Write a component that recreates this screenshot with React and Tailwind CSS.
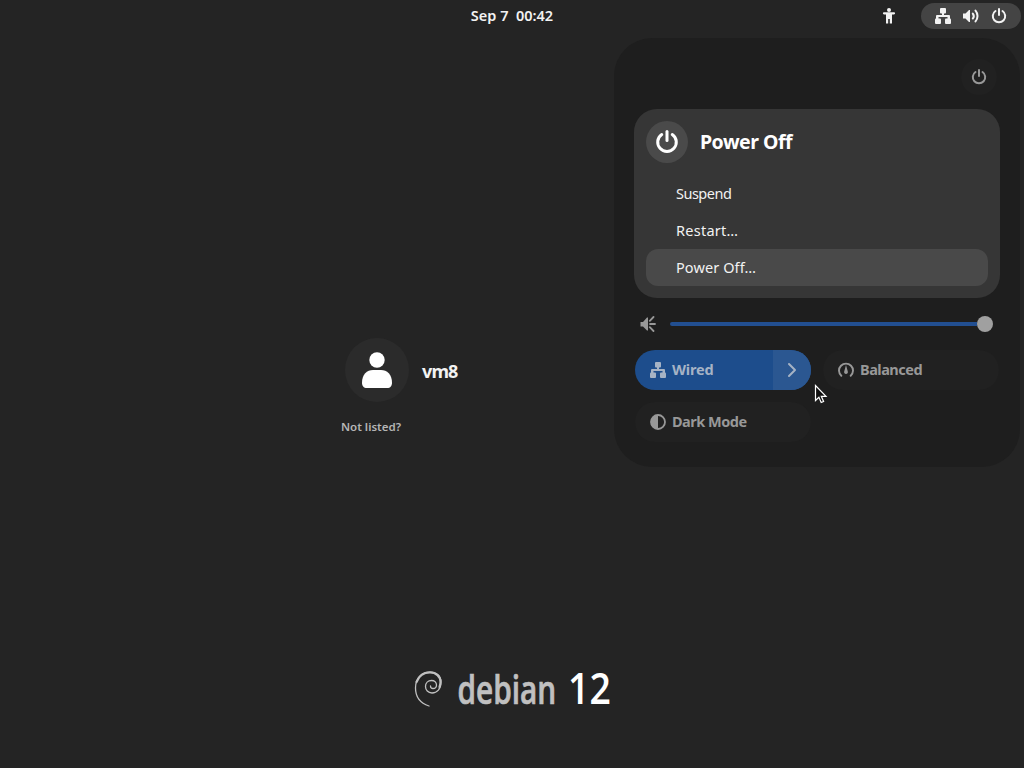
import React from 'react'

function PowerIcon({ size = 16, className = '' }) {
  return (
    <svg width={size} height={size} viewBox="0 0 16 16" fill="none" stroke="currentColor" strokeWidth="2" strokeLinecap="round" className={className}>
      <path d="M4.500 3A6.200 6.200 0 1 0 11.500 3" />
      <path d="M8 1v6" />
    </svg>
  )
}

function WiredIcon() {
  return (
    <svg width="16" height="16" viewBox="0 0 16 16" fill="currentColor">
      <rect x="5" y="0" width="6" height="5.500" rx="1" />
      <rect x="0" y="10.500" width="6" height="5.500" rx="1" />
      <rect x="10" y="10.500" width="6" height="5.500" rx="1" />
      <path d="M7 5h2v2h5a1 1 0 0 1 1 1v3h-2.500V9h-9v2H1V8a1 1 0 0 1 1-1h5z" />
    </svg>
  )
}

function AccessibilityIcon() {
  return (
    <svg width="16" height="16" viewBox="0 0 16 16" fill="currentColor">
      <circle cx="8" cy="2" r="2" />
      <path d="M3 4.200h10a1.100 1.100 0 0 1 0 2.200h-2V15.500H8.800V11H7.200v4.500H5V6.400H3a1.100 1.100 0 0 1 0-2.200z" />
    </svg>
  )
}

function SpeakerIcon() {
  return (
    <svg width="16" height="16" viewBox="0 0 16 16" fill="none" stroke="currentColor" strokeWidth="2" strokeLinecap="round">
      <path d="M0 5.500h2.500L6 2h1v12H6l-3.500-3.500H0z" fill="currentColor" stroke="none" />
      <path d="M9.800 5.500a4 4 0 0 1 0 5" />
      <path d="M12.500 2.600a8.200 8.200 0 0 1 0 10.800" />
    </svg>
  )
}

function SliderSpeakerIcon() {
  return (
    <svg width="16" height="16" viewBox="0 0 16 16" fill="none" stroke="currentColor" strokeWidth="1.800" strokeLinecap="round">
      <path d="M0.500 6H3l4-4.500h1v13H7L3 10.500H0.500z" fill="currentColor" stroke="none" />
      <path d="M10 8h5M9.800 4.800l3.700-3.800M9.800 11.200l3.700 3.800" />
    </svg>
  )
}

function BalancedIcon() {
  return (
    <svg width="16" height="16" viewBox="0 0 16 16" fill="none" stroke="currentColor" strokeWidth="1.900" strokeLinecap="round">
      <path d="M3.300 13.800A7 7 0 1 1 12.700 13.800" />
      <path d="M8 3L9.800 9.500a1.900 1.900 0 1 1-3.600 0z" fill="currentColor" stroke="none" />
    </svg>
  )
}

function DarkModeIcon() {
  return (
    <svg width="16" height="16" viewBox="0 0 16 16">
      <circle cx="8" cy="8" r="7" fill="none" stroke="currentColor" strokeWidth="1.800" />
      <path d="M8 1a7 7 0 0 0 0 14z" fill="currentColor" />
    </svg>
  )
}

function TopBar() {
  return (
    <header className="grid h-8 grid-cols-3 items-center text-[#f2f2f2]">
      <div />
      <div className="pb-0.5 text-center text-[14.500px] leading-[30px] font-semibold whitespace-pre">Sep 7  00:42</div>
      <div className="flex items-center justify-end gap-6 pr-[3px]">
        <AccessibilityIcon />
        <div className="flex h-[26px] w-[100px] items-center justify-center gap-3 rounded-full bg-[#444444]">
          <WiredIcon />
          <SpeakerIcon />
          <PowerIcon />
        </div>
      </div>
    </header>
  )
}

function UserList() {
  return (
    <section className="mx-auto mt-[306px] w-[342px]">
      <div className="flex items-center gap-[13px] pl-1">
        <div className="flex size-16 items-center justify-center rounded-full bg-[#2b2b2b]">
          <svg width="32" height="38" viewBox="0 0 32 38" fill="#ffffff">
            <circle cx="16" cy="9" r="7.700" />
            <path d="M1 31.500C1 23.500 6 19 12 19h8c6 0 11 4.500 11 12.500 0 3.500-1.500 5.500-5 5.500H6c-3.500 0-5-2-5-5.500z" />
          </svg>
        </div>
        <span className="pt-0.5 text-lg font-bold tracking-[-0.9px] text-[#f2f2f2]">vm8</span>
      </div>
      <button className="mt-4 block text-[11.500px] leading-[18px] font-semibold text-[#b5b5b5]">Not listed?</button>
    </section>
  )
}

function DebianLogo() {
  return (
    <svg width="200" height="70" viewBox="0 -12 200 70" className="mx-auto mt-auto mb-[43px]">
      <g fill="none" stroke="#c0c0c0" strokeLinecap="round">
        <path d="M17 39C8 36 3.500 29 3.500 21 3.500 11 10 5 18 5c6.500 0 11 4 11 10 0 7-4 11-9 11-4 0-6.500-3-6.500-6.500 0-3.500 2.500-6 6-6 3 0 5 2 5 4.500 0 2-1.500 3.500-3.500 3.500-1.500 0-2.500-1-2.500-2.500" strokeWidth="1.300" />
        <path d="M4.500 15C7 8.500 12 5.500 18 5.500c6 0 10.500 4 10.500 9.500 0 2-.5 3.500-1 5" strokeWidth="2.200" />
      </g>
      <text transform="translate(45.500 36.500) scale(0.745 1)" className="font-['Open_Sans',sans-serif] text-[40px] font-semibold" fill="#c0c0c0" stroke="#c0c0c0" strokeWidth="0.700">debian</text>
      <text transform="translate(156 36.500) scale(0.85 1)" className="font-['Open_Sans',sans-serif] text-[44px] font-semibold" fill="#ffffff">12</text>
    </svg>
  )
}

const powerItems = [
  { label: 'Suspend', style: 'tracking-[-0.500px]' },
  { label: 'Restart…', style: 'tracking-[0.250px]' },
  { label: 'Power Off…', style: 'tracking-[0.100px] bg-[#494949]' },
]

function PowerMenu() {
  return (
    <div className="mt-3.5 h-[189px] w-[366px] rounded-[23px] bg-[#363636] p-3 text-[#f2f2f2]">
      <div className="flex items-center gap-3">
        <div className="flex size-[42px] items-center justify-center rounded-full bg-[#4a4a4a]">
          <PowerIcon size={24} className="text-white" />
        </div>
        <h2 className="pb-px text-[19.500px] font-bold tracking-[-0.500px] text-white">Power Off</h2>
      </div>
      <ul className="mt-3">
        {powerItems.map((item) => (
          <li key={item.label} className={`flex h-[37px] items-center rounded-xl pl-[30px] text-[14.500px] ${item.style}`}>
            {item.label}
          </li>
        ))}
      </ul>
    </div>
  )
}

function QuickToggle({ icon, label }) {
  return (
    <button className="flex h-10 items-center gap-1.5 rounded-full bg-[#212121] pl-[15px] text-[14.500px] font-bold tracking-[-0.500px]">
      {icon}
      {label}
    </button>
  )
}

function QuickSettings() {
  return (
    <div className="absolute top-[38px] left-[614px] h-[429px] w-[406px] rounded-[38px] bg-[#1e1e1e] px-5 pt-[21px] text-[#989898]">
      <div className="flex justify-end pr-[3px]">
        <button className="flex size-9 items-center justify-center rounded-full bg-[#212121]">
          <PowerIcon />
        </button>
      </div>
      <PowerMenu />
      <div className="mt-[18px] flex h-4 items-center gap-3.5 pl-1.5">
        <SliderSpeakerIcon />
        <div className="flex w-[323px] items-center">
          <div className="h-1 flex-1 rounded-l-full bg-[#224f91]" />
          <div className="size-4 rounded-full bg-[#a0a0a0]" />
        </div>
      </div>
      <div className="mt-[18px] ml-px grid w-[364px] grid-cols-2 gap-3">
        <div className="flex h-10 overflow-hidden rounded-full bg-[#1d4d8c] text-[14.500px] font-bold tracking-[-0.200px] text-[#a6b3c5]">
          <button className="flex flex-1 items-center gap-1.5 pl-[15px]">
            <WiredIcon />
            Wired
          </button>
          <button className="flex w-[38px] items-center justify-center bg-[#2b5791]">
            <svg width="16" height="16" viewBox="0 0 16 16" fill="none" stroke="currentColor" strokeWidth="2" strokeLinecap="round" strokeLinejoin="round">
              <path d="M5 2l6 6-6 6" />
            </svg>
          </button>
        </div>
        <QuickToggle icon={<BalancedIcon />} label="Balanced" />
        <QuickToggle icon={<DarkModeIcon />} label="Dark Mode" />
      </div>
    </div>
  )
}

function Cursor() {
  return (
    <svg width="14" height="21" viewBox="0 0 14 21" className="absolute top-[384px] left-[814px]">
      <path d="M1.500 1.500v15l3.400-3.200 2.300 5.200 2.400-1-2.300-5.200h4.700z" fill="#111111" stroke="#ffffff" strokeWidth="1.200" />
    </svg>
  )
}

export default function App() {
  return (
    <div className="relative flex h-screen w-full flex-col overflow-hidden bg-[#242424] font-['Noto_Sans',sans-serif]">
      <TopBar />
      <UserList />
      <DebianLogo />
      <QuickSettings />
      <Cursor />
    </div>
  )
}
